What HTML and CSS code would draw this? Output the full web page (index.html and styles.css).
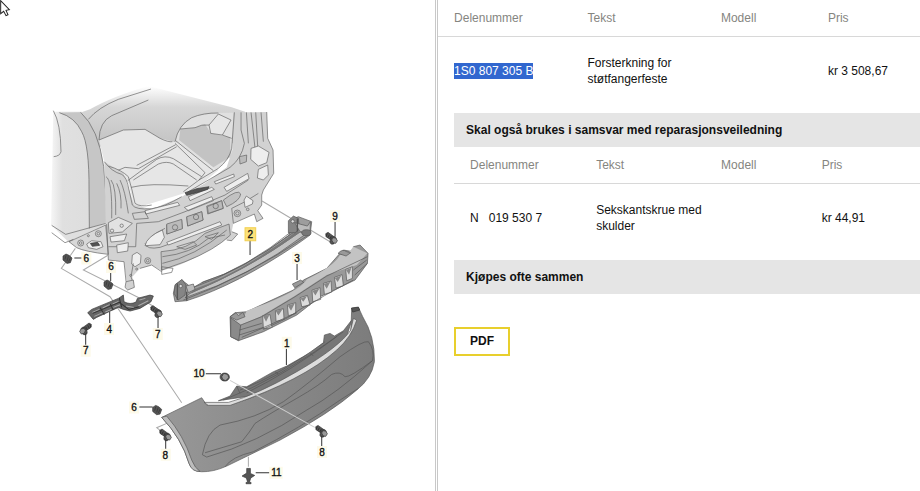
FILE: index.html
```html
<!DOCTYPE html>
<html lang="no">
<head>
    <meta charset="UTF-8">
    <meta name="viewport" content="width=device-width, initial-scale=1.0">
    <title>Delekatalog</title>
    <link rel="stylesheet" href="styles.css">
</head>
<body>
    <main class="catalog">
        <section class="drawing">
            <svg viewBox="0 0 1308 1473" role="img" aria-label="Støtfanger bak">
                <defs>
                    <linearGradient id="fade" x1="0" x2="0" y1="0" y2="1">
                        <stop offset="0" stop-color="#fff"/>
                        <stop offset="0.35" stop-color="#d6d6d6"/>
                        <stop offset="1" stop-color="#c2c2c2"/>
                    </linearGradient>
                    <linearGradient id="fender" x1="0" x2="1" y1="0" y2="0">
                        <stop offset="0" stop-color="#f6f6f6"/>
                        <stop offset="0.2" stop-color="#e0e0e0"/>
                        <stop offset="1" stop-color="#dcdcdc"/>
                    </linearGradient>
                    <linearGradient id="cover" x1="0" x2="1" y1="0" y2="0">
                        <stop offset="0" stop-color="#989898"/>
                        <stop offset="1" stop-color="#7c7c7c"/>
                    </linearGradient>
                    <g id="screw">
                        <path class="dark" d="M-16 -17l7 -4 18 13 -6 12 -18 -12z"/>
                        <path class="ink" d="M-11 -18l-4 9M-5 -14l-5 9M1 -10l-5 9"/>
                        <ellipse class="dark" cx="6" cy="3" rx="8" ry="12" transform="rotate(25 6 3)"/>
                        <path class="metal" d="M5 -5l9 1 5 8 -5 8 -8 -2 -4 -8z"/>
                    </g>
                    <g id="clip">
                        <path class="dark" d="M-14 -8l9 -6 9 4 9 8 -5 14 -10 2 -12 -10z"/>
                        <path class="metal" d="M-5 -10l-3 12M2 -7l-4 14M8 -3l-5 12"/>
                    </g>
                </defs>

                <!-- rear body -->
                <g class="line" transform="translate(135 240)">
                    <!-- roof and rear wall -->
                    <path fill="url(#fade)" stroke="none" d="M105 98L135 88Q200 50 310 18L560 82 600 95 600 190 400 190 160 200z"/>
                    <!-- cargo floor -->
                    <path fill="#e6e6e6" stroke="none" d="M162 180L235 150 300 148 345 175 392 187 520 270 450 330 270 385 250 310 178 245z"/>
                    <path d="M130 118Q160 82 220 58L318 27M310 60L200 107Q163 125 162 180L235 150 300 148 345 175Q370 187 382 185"/>
                    <path d="M205 277L240 262 280 266 395 200M275 256L392 194M248 302L335 238Q360 224 385 236L470 290M265 300L340 252Q365 242 385 252L455 300M258 322Q310 308 430 318"/>
                    <!-- right wheel house -->
                    <path fill="#e0e0e0" stroke="none" d="M390 185Q400 135 440 113 480 97 565 98L560 225 515 270z"/>
                    <path fill="#c3c3c3" stroke="none" d="M406 148L450 143 480 132 497 160 555 172 557 230 505 262 402 180z"/>
                    <path fill="#e6e6e6" d="M520 102L558 120 532 165 497 160 492 135z"/>
                    <path d="M390 185Q400 135 440 113 475 98 520 99M405 147L450 143Q470 132 492 135M532 165L560 175M392 182L505 272M390 190L480 278 462 300"/>
                    <!-- left fender -->
                    <path fill="url(#fender)" stroke="none" d="M25 95L110 95 150 160 178 300 190 430 70 485 18 435z"/>
                    <path fill="#c6c6c6" stroke="none" d="M43 98Q90 112 110 155 133 195 132 330L133 445 188 425 176 260Q160 145 107 97z"/>
                    <path d="M25 92Q47 130 48 215 45 228 26 230M43 98Q90 112 110 155 133 195 132 330L133 445M107 97Q160 145 176 260L190 435"/>
                    <!-- rear panel -->
                    <path fill="#d2d2d2" stroke="none" d="M568 97L665 96 668 175 684 210 686 280 655 330 650 345 650 375 638 392 654 415 635 425 628 402 565 430 560 455 578 462 560 482 540 478Q450 545 350 572L320 555 285 565 262 590 268 620 248 630 237 545 190 540 182 430 178 245 235 280 268 375 320 388 410 350 480 310 545 262 562 210z"/>
                    <path d="M568 97L560 205Q552 240 520 265L462 300 415 335M588 97V150L598 190Q590 235 555 262L430 335M604 97L610 190M618 97L630 205M632 97L638 200M648 97L655 185M665 96L668 175 684 210 686 280 655 330 650 345V375L638 392 654 415 635 425 628 402 565 430"/>
                    <path class="hole" d="M618 205L640 198 672 217 665 248 640 258 617 238zM640 268L668 255 670 285 655 300 637 294z"/>
                    <path fill="#bbb" d="M583 230L605 225 604 245 585 252z"/>
                    <path d="M178 245Q200 275 230 283 245 290 252 330L262 375Q272 390 320 386 360 380 410 350M190 258Q230 270 250 290 262 330 270 370 285 382 320 375M183 290Q202 300 200 415M198 300Q214 320 212 405M215 310Q230 340 228 385M225 300Q240 330 250 400"/>
                    <path class="hole" d="M300 392L398 367 404 376 302 402zM430 350L500 322 508 328 435 362zM508 305L566 282 568 290 512 312zM537 322L608 280 612 296 545 334zM418 382L500 350 505 362 430 392z"/>
                    <path class="dark" d="M420 338L455 326 492 320 488 328 455 338 425 346z"/>
                    <path d="M262 400L300 395 310 415 268 418zM275 430L340 425 420 395 540 345 610 300M275 430L272 500 190 500M305 500Q300 480 335 458L360 445M300 490Q305 510 345 502L420 475 520 430M365 435L410 420 412 445 365 462zM425 412L470 395 474 420 428 438zM485 378L530 362 535 385 488 402z"/>
                    <path fill="#bbb" d="M365 432L410 418 412 446 366 462zM425 410L470 395 474 420 428 438zM487 380L530 362 534 385 490 400z"/>
                    <path class="hole" d="M300 497Q305 470 352 450L358 472 345 494zM365 487L525 425 530 435 370 495z"/>
                    <circle cx="390" cy="442" r="8"/><circle cx="453" cy="411" r="8"/><circle cx="512" cy="378" r="8"/>
                    <path fill="#c2c2c2" d="M535 360Q580 325 587 342 585 362 545 380zM348 515Q430 510 480 460 530 440 552 432L556 465Q510 510 420 545L350 570z"/>
                    <path d="M352 530Q440 520 490 475L540 465M352 550Q450 530 545 450M395 500L445 485 455 495 420 508zM480 470L520 458 500 478zM350 560L384 565 380 577 350 583zM560 455L578 462 560 482 545 480M640 340L600 365 560 385 565 430"/>
                    <path class="hole" d="M597 360L604 348 624 362 622 372 600 382z"/>
                    <circle cx="577" cy="400" r="10"/><circle cx="577" cy="400" r="5"/><circle cx="608" cy="388" r="4"/>
                    <!-- left corner and sill -->
                    <path fill="#d8d8d8" d="M72 485L182 435 190 523Q120 515 95 503z"/>
                    <path d="M20 436L62 463 182 430M20 458L60 488 85 478"/>
                    <path fill="#e2e2e2" d="M190 428L220 412 262 430 232 456 192 460z"/>
                    <path class="hole" d="M125 492L140 482 168 485 174 500 155 508 130 503zM195 470L245 462 238 482 198 486zM215 495L250 488 248 513 217 518zM262 525L276 517 288 526 286 550 270 560 260 552z"/>
                    <path class="dark" d="M136 490L158 487 164 496 142 499z"/>
                    <circle cx="107" cy="489" r="9"/><circle cx="107" cy="489" r="4"/>
                    <circle cx="160" cy="461" r="9"/><circle cx="160" cy="461" r="4"/>
                    <circle cx="308" cy="542" r="9"/><circle cx="308" cy="542" r="4"/>
                    <circle cx="201" cy="452" r="5"/><circle cx="230" cy="437" r="5"/><circle cx="275" cy="567" r="3"/><circle cx="257" cy="586" r="3"/><circle cx="130" cy="467" r="3"/>
                    <path d="M185 432L190 540 237 545 243 605M265 550L258 590 265 612M285 565L320 555 350 575"/>
                    <path fill="#d2d2d2" d="M243 605L265 600 268 622 248 630 240 622z"/>
                </g>

                <!-- leader lines -->
                <path class="guide" d="M226 745L184 805 330 890 545 1208M325 765L250 810 430 900 485 935M786 603L990 725M745 1370V1400M500 1270L470 1283 488 1297"/>

                <!-- 2: reinforcement -->
                <g class="line heavy" transform="translate(630 600)">
                    <path fill="#9d9d9d" d="M-110 280L-105 255 -85 240 -65 255 -55 265 -20 245Q100 210 237 105L240 60 265 50 305 65 300 105 265 130Q80 255 -70 302L-105 305z"/>
                    <path fill="#c2c2c2" d="M-60 280Q110 210 270 96L290 100Q120 230 -75 293z"/>
                    <path fill="#777" stroke="none" d="M-50 268Q90 220 262 92L270 97Q110 212 -55 278z"/>
                    <path d="M-50 262Q90 215 258 92M-25 248Q110 205 250 90M-80 300Q110 230 295 105"/>
                    <path fill="#858585" d="M235 98L235 62 250 48 265 55 268 88 255 98zM-104 253L-84 238 -72 255 -75 285 -96 300 -108 280z"/>
                    <path fill="#bbb" d="M254 68L292 78 301 65 300 98 270 95zM-72 258L-50 252 -45 268 -65 278z"/>
                    <ellipse fill="#777" cx="289" cy="98" rx="14" ry="9"/>
                    <circle fill="#ddd" cx="248" cy="64" r="5"/><circle fill="#ddd" cx="-88" cy="258" r="5"/>
                    <path stroke-width="4" d="M-98 250V300M-70 275V302M262 56V94"/>
                </g>

                <!-- 3: energy absorber -->
                <g class="line heavy" transform="translate(630 600)">
                    <path fill="#999" d="M60 350L75 338 110 335 250 270 280 240 350 205 385 165 400 150 430 155 430 140 450 135 474 160 472 190 435 240 330 290 260 345 160 395 85 422 62 410z"/>
                    <path fill="#c3c3c3" stroke="none" d="M62 353L80 338 102 350 110 332Q270 275 290 238 370 200 390 165L410 165 430 140 472 160 440 195 350 225 250 290 150 350 90 375z"/>
                    <path fill="#8a8a8a" d="M62 353L92 375 86 421 62 410z"/>
                    <path fill="#999" d="M60 350L78 338 85 347 98 337 105 350 80 360zM384 160Q397 145 410 155L422 158 408 168zM247 252L272 240 281 247 254 263z"/>
                    <path d="M92 375L155 350 255 290 350 228 472 170M88 390L155 370M87 405L160 382M430 210L470 180M434 225L472 190"/>
                    <g fill="#ddd">
                        <path d="M158 347L180 344 186 382 160 387zM196 332L220 326 222 358 198 364zM232 315L257 308 257 340 235 347zM270 293L292 286 300 315 275 320zM306 270L330 263 332 298 308 305zM340 250L363 243 365 276 343 283zM373 232L396 224 400 257 378 264zM407 208L427 200 427 235 410 242z"/>
                    </g>
                    <path fill="#888" stroke="none" d="M159 348L178 345 168 365zM197 333L218 327 205 346zM233 316L254 310 243 332zM271 295L291 288 280 305zM307 272L328 265 316 286zM341 252L361 245 350 266zM374 234L394 226 383 246zM408 210L424 203 417 224z"/>
                    <path d="M160 387L198 370 235 352 275 325 308 308 343 287 378 268 430 240M95 412L260 338"/>
                </g>

                <!-- 1: bumper cover -->
                <g class="line heavy" transform="translate(420 990)">
                    <path fill="#777" d="M235 212L270 198 290 168 320 170 400 125 440 108 510 68 550 38 553 15 570 10 583 18 610 2 635 -30 620 20 500 120 350 195z"/>
                    <path d="M250 210Q420 145 610 5M300 180Q420 135 555 35M320 188Q450 125 590 20M405 125L415 132M510 68L520 78M290 168L300 190"/>
                    <path fill="url(#cover)" d="M65 262L185 203 200 225 270 225Q510 150 632 10L635 -65 655 -68 668 -40Q705 20 703 95 695 145 650 180 570 250 420 330L260 408Q220 426 185 425 155 425 147 400 125 325 65 262z"/>
                    <path fill="#ddd" d="M192 217L265 217Q350 195 470 125 600 50 632 0L640 -35 650 -30Q635 20 590 60 490 150 270 226L205 226z"/>
                    <path fill="#bcbcbc" d="M65 262L80 258Q130 315 155 390 165 415 180 424 155 425 147 400 125 325 65 262z"/>
                    <path class="dark" d="M634 -66L655 -69 659 -60 638 -54z"/>
                    <path d="M187 374Q200 305 240 285 350 265 430 215 500 165 600 80 670 30 685 35 705 60 697 92 590 190 500 240 350 340 200 381zM195 368L305 335Q330 305 345 280 390 250 470 205 540 165 575 133 600 122 615 140 630 142 697 92M255 410Q275 380 340 365 480 295 600 210L655 175"/>
                </g>
                <path class="guide light" d="M690 1141L944 1282"/>

                <!-- 4: side bracket -->
                <g transform="translate(150 840)">
                    <path fill="#666" stroke="#333" stroke-width="2" d="M113 98L125 88 205 55 220 45 222 65Q240 75 258 66L262 55 300 45 310 48 303 65 270 85 240 93 220 88 205 82 140 112 130 118z"/>
                    <path stroke="#aaa" stroke-width="3" fill="none" d="M127 97L148 88M133 109L160 97M158 84L180 73M166 96L184 88M188 72L205 64M190 82L210 74M228 78L252 82M265 77L295 62M268 60L286 55"/>
                    <path stroke="#333" stroke-width="3" fill="none" d="M128 100L208 67 236 88 268 80M150 82L163 104M180 72L190 90M208 54L215 82"/>
                </g>

                <!-- fasteners -->
                <use href="#clip" x="203" y="776"/>
                <use href="#clip" x="326" y="854"/>
                <use href="#screw" x="468" y="938"/>
                <use href="#screw" transform="translate(258 990) scale(-1 1)"/>
                <use href="#screw" x="993" y="718"/>
                <use href="#clip" x="472" y="1230"/>
                <use href="#screw" x="495" y="1308"/>
                <use href="#screw" x="963" y="1297"/>
                <ellipse class="dark" cx="674" cy="1131" rx="14" ry="12"/>
                <path class="metal" d="M665 1130l6 -10 12 3 3 10 -9 9 -9 -4z"/>
                <path class="dark" d="M740 1405h11v15l13 6 -12 8 -4 13h5v4h-15v-4h5l-4 -13 -13 -6 14 -9z"/>

                <!-- callouts -->
                <path class="callout" d="M223 774H250M332 810V843M474 950V985M329 936V970M257 1000V1035M1005 664V710M750 720V765M891 788V840M859 1045V1095M616 1121H663M418 1221H458M497 1318V1347M965 1307V1342M767 1418H808"/>
                <g class="label-box">
                    <path d="M244 757h30v36h-30zM318 783h30v36h-30zM458 984h30v36h-30zM312 969h30v36h-30zM242 1034h30v36h-30zM990 630h30v36h-30zM876 756h30v36h-30zM845 1010h30v36h-30zM577 1104h40v36h-40zM387 1204h30v36h-30zM482 1346h30v36h-30zM951 1338h30v36h-30zM808 1400h40v36h-40z"/>
                    <path class="selected" d="M735 683h32v39h-32z"/>
                </g>
                <g class="numbers">
                    <text x="259" y="785">6</text>
                    <text x="333" y="811">6</text>
                    <text x="473" y="1014">7</text>
                    <text x="328" y="998">4</text>
                    <text x="257" y="1062">7</text>
                    <text x="1005" y="659">9</text>
                    <text x="751" y="713">2</text>
                    <text x="891" y="785">3</text>
                    <text x="860" y="1041">1</text>
                    <text x="597" y="1132">10</text>
                    <text x="402" y="1232">6</text>
                    <text x="496" y="1377">8</text>
                    <text x="966" y="1367">8</text>
                    <text x="829" y="1428">11</text>
                </g>

                <!-- pointer -->
                <path fill="#fff" stroke="#222" stroke-width="3" d="M2 2V41L11 34 18 47 24 44 18 31 28 29z"/>
            </svg>
        </section>

        <section class="parts">
            <table class="parts-table">
                <thead>
                    <tr>
                        <th class="col-number">Delenummer</th>
                        <th class="col-text">Tekst</th>
                        <th class="col-model">Modell</th>
                        <th>Pris</th>
                    </tr>
                </thead>
                <tbody>
                    <tr>
                        <td><span class="marked">1S0 807 305 B</span></td>
                        <td>Forsterkning for støtfangerfeste</td>
                        <td></td>
                        <td>kr 3 508,67</td>
                    </tr>
                </tbody>
            </table>

            <div class="related">
                <h2>Skal også brukes i samsvar med reparasjonsveiledning</h2>
                <table class="parts-table inner">
                    <thead>
                        <tr>
                            <th class="col-number">Delenummer</th>
                            <th class="col-text">Tekst</th>
                            <th class="col-model">Modell</th>
                            <th>Pris</th>
                        </tr>
                    </thead>
                    <tbody>
                        <tr>
                            <td class="part-number">N   019 530 7</td>
                            <td>Sekskantskrue med skulder</td>
                            <td></td>
                            <td>kr 44,91</td>
                        </tr>
                    </tbody>
                </table>
                <h2>Kjøpes ofte sammen</h2>
                <button type="button" class="pdf-button">PDF</button>
            </div>
        </section>
    </main>
</body>
</html>
```
FILE: styles.css
```css
* {
    box-sizing: border-box;
}
body {
    margin: 0;
    font-family: "Liberation Sans", Arial, sans-serif;
    font-size: 12px;
    line-height: 16px;
    color: #111;
    background-color: #fff;
}
.catalog {
    display: flex;
    min-height: 100vh;
}
.drawing {
    width: 47.4%;
    flex-shrink: 0;
}
.drawing svg {
    display: block;
    width: 100%;
}
.parts {
    flex: 1;
    min-width: 0;
    margin-left: -1px;
    border-left: 3px double #c8c8c8;
}

/* tables */
.parts-table {
    width: 100%;
    table-layout: fixed;
    border-collapse: separate;
    border-spacing: 0;
}
.parts-table th {
    padding: 10px 0;
    border-bottom: 1px solid #d8d8d8;
    font-weight: normal;
    text-align: left;
    color: #85857f;
}
.parts-table td {
    padding: 18px 24px 26px 0;
}
.parts-table th:first-child,
.parts-table td:first-child {
    padding-left: 16px;
}
.parts-table th:last-child,
.parts-table td:last-child {
    padding-right: 0;
}
.col-number { width: 31%; }
.col-text { width: 27.7%; }
.col-model { width: 22.2%; }
.inner .col-number { width: 30.5%; }
.inner .col-text { width: 26.8%; }
.inner .col-model { width: 21.6%; }
.inner td {
    padding-right: 16px;
}
.part-number {
    white-space: pre;
}
.marked {
    display: inline-block;
    background-color: #3167cf;
    color: #fff;
}

/* related parts */
.related {
    padding-left: 16px;
}
.related h2 {
    margin: 0;
    padding: 9px 12px;
    background-color: #e5e5e5;
    font-size: 12px;
    line-height: 16px;
}
.pdf-button {
    margin-top: 33px;
    padding: 5px 14px;
    border: 2px solid #e8cf2d;
    background-color: #fff;
    color: #111;
    font-family: inherit;
    font-size: 12px;
    font-weight: bold;
    line-height: 15px;
    cursor: pointer;
}

/* drawing */
.line {
    fill: none;
    stroke: #606060;
    stroke-width: 2;
    stroke-linejoin: round;
}
.heavy {
    stroke: #555;
}
.hole {
    fill: #eee;
}
.ink {
    fill: none;
    stroke: #222;
    stroke-width: 2;
}
.dark {
    fill: #555;
    stroke: #333;
    stroke-width: 2;
}
.metal {
    fill: #999;
    stroke: #333;
    stroke-width: 2;
}
.guide {
    fill: none;
    stroke: #aaa;
    stroke-width: 3;
}
.light {
    stroke: #ccc;
}
.callout {
    fill: none;
    stroke: #333;
    stroke-width: 3;
}
.label-box {
    fill: #fdfae9;
}
.selected {
    fill: #fbe17a;
    stroke: #f2cf4e;
    stroke-width: 3;
}
.numbers {
    fill: #111;
    stroke: #111;
    stroke-width: 1;
    font-size: 30px;
    text-anchor: middle;
}
```
